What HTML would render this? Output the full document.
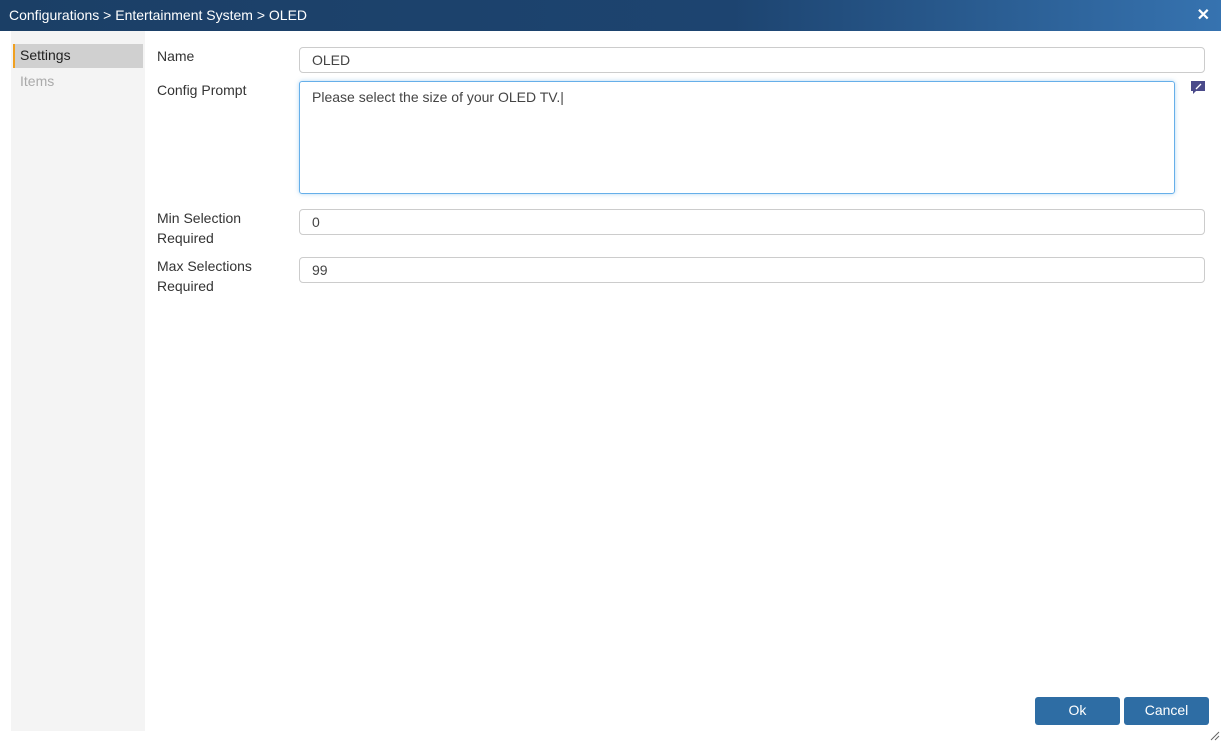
<!DOCTYPE html>
<html><head><style>
body{margin:0;width:1221px;height:741px;background:#fff;font-family:"Liberation Sans",sans-serif;font-size:14px;color:#333;position:relative;overflow:hidden}
.hdr{position:absolute;left:0;top:0;width:1221px;height:31px;background:linear-gradient(90deg,#1b3f66 0%,#1d4470 60%,#3673b0 100%);color:#fff}
.hdr .t{position:absolute;left:9px;top:7px;font-size:14px}
.hdr .x{position:absolute;right:11px;top:5px;font-size:16px;font-weight:bold}
.side{position:absolute;left:11px;top:31px;width:134px;height:700px;background:#f4f4f4}
.sel{position:absolute;left:2px;top:13px;width:128px;height:24px;background:#d0d0d0;border-left:2px solid #f0a020}
.sel span{position:absolute;left:5px;top:3px;color:#222}
.it{position:absolute;left:9px;top:42px;color:#aaa}
.lbl{position:absolute;left:157px;line-height:20px}
.in{position:absolute;left:299px;width:904px;height:24px;border:1px solid #ccc;border-radius:4px;box-sizing:content-box}
.in span{position:absolute;left:12px;top:4px;color:#444}
.ta{position:absolute;left:299px;top:81px;width:874px;height:111px;border:1px solid #66afe9;border-radius:3px;box-shadow:0 0 4px rgba(102,175,233,.5)}
.ta span{position:absolute;left:12px;top:7px;color:#444}
.btn{position:absolute;top:697px;height:28px;background:#2e6da4;color:#fff;border-radius:3px;text-align:center;line-height:27px}
</style></head><body>
<div class="hdr"><span class="t">Configurations &gt; Entertainment System &gt; OLED</span><span class="x">✕</span></div>
<div class="side"><div class="sel"><span>Settings</span></div><div class="it">Items</div></div>
<div class="lbl" style="top:46px">Name</div>
<div class="lbl" style="top:80px">Config Prompt</div>
<div class="lbl" style="top:208px">Min Selection<br>Required</div>
<div class="lbl" style="top:256px">Max Selections<br>Required</div>
<div class="in" style="top:47px"><span>OLED</span></div>
<div class="ta"><span>Please select the size of your OLED TV.<span style="position:static;font-weight:100">|</span></span></div>
<svg style="position:absolute;left:1191px;top:81px" width="14" height="14" viewBox="0 0 14 14"><path d="M0 0h14v10H5l-3 3v-3H0z" fill="#4a4a8a"/><path d="M5 8l5-5" stroke="#fff" stroke-width="1.3"/></svg>
<div class="in" style="top:209px"><span>0</span></div>
<div class="in" style="top:257px"><span>99</span></div>
<div class="btn" style="left:1035px;width:85px">Ok</div>
<div class="btn" style="left:1124px;width:85px">Cancel</div>
<svg style="position:absolute;left:1210px;top:731px" width="10" height="10"><path d="M1 9L9 1M5 9L9 5" stroke="#666"/></svg>
</body></html>
